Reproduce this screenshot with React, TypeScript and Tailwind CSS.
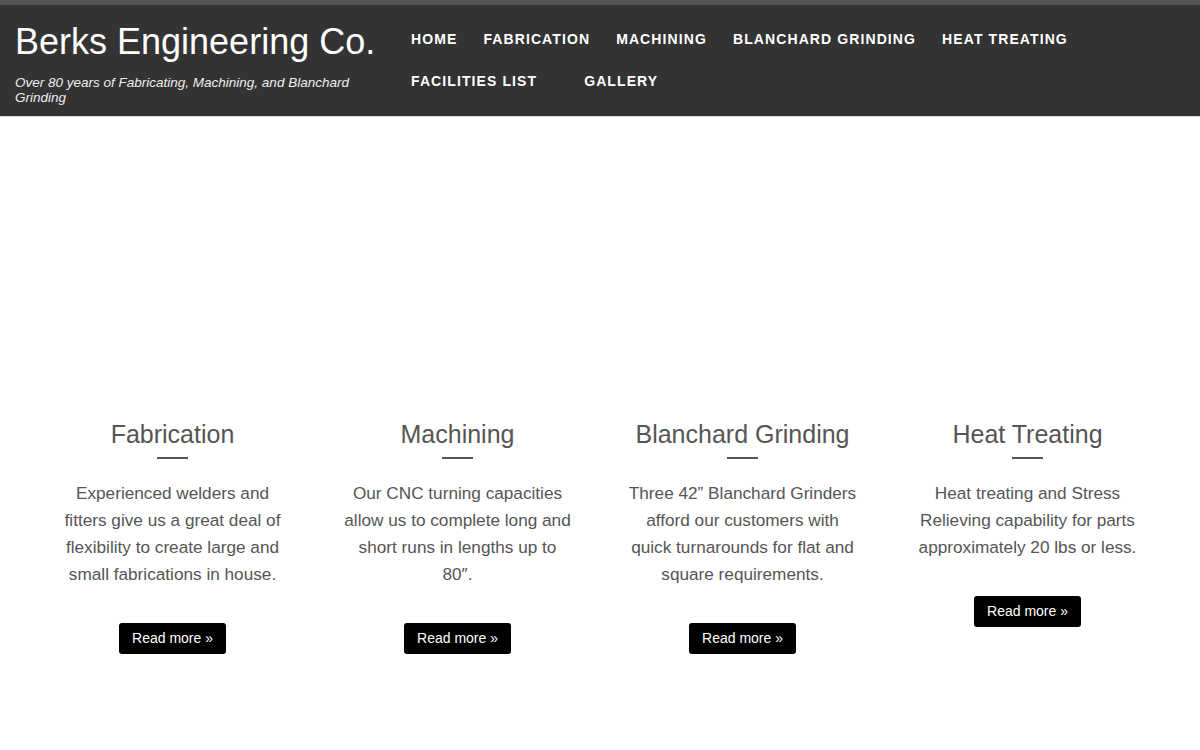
const navRows = [
  ['Home', 'Fabrication', 'Machining', 'Blanchard Grinding', 'Heat Treating'],
  ['Facilities List', 'Gallery'],
]

const services = [
  {
    title: 'Fabrication',
    text: 'Experienced welders and fitters give us a great deal of flexibility to create large and small fabrications in house.',
  },
  {
    title: 'Machining',
    text: 'Our CNC turning capacities allow us to complete long and short runs in lengths up to 80″.',
  },
  {
    title: 'Blanchard Grinding',
    text: 'Three 42” Blanchard Grinders afford our customers with quick turnarounds for flat and square requirements.',
  },
  {
    title: 'Heat Treating',
    text: 'Heat treating and Stress Relieving capability for parts approximately 20 lbs or less.',
  },
]

function Header() {
  return (
    <header className="border-t-[5px] border-[#555555] bg-[#333333] border-b border-b-[#d8d8d8]">
      <div className="flex h-[111px]">
        <div className="w-[395px] shrink-0 pl-[15px] pt-[17px]">
          <h1 className="text-[36px] leading-[40px] text-white">Berks Engineering Co.</h1>
          <p className="mt-[13px] w-[350px] text-[13.5px] leading-[15px] italic text-[#eeeeee]">
            Over 80 years of Fabricating, Machining, and Blanchard Grinding
          </p>
        </div>
        <nav className="pt-[13px] pl-[16px]">
          {navRows.map((row, i) => (
            <ul key={i} className={'flex h-[42px] items-center ' + (i === 1 ? 'gap-[47px]' : 'gap-[26px]')}>
              {row.map((item) => (
                <li
                  key={item}
                  className="text-[14px] font-bold uppercase tracking-[1.1px] text-white"
                >
                  {item}
                </li>
              ))}
            </ul>
          ))}
        </nav>
      </div>
    </header>
  )
}

export default function App() {
  return (
    <div className="min-h-[750px] bg-white font-['Liberation_Sans',Arial,sans-serif]">
      <Header />
      <section className="mx-auto grid w-[1140px] grid-cols-4 pt-[302px]">
        {services.map((s) => (
          <div key={s.title} className="flex flex-col items-center px-[27px] text-center">
            <h2 className="text-[25px] leading-[30px] text-[#555555]">{s.title}</h2>
            <div className="mt-[8px] h-[2px] w-[31px] bg-[#555555]" />
            <p className="mt-[21px] text-[17.2px] leading-[27px] text-[#555555]">{s.text}</p>
            <a className="mt-[35px] rounded-[3px] bg-black px-[13px] py-[6px] text-[14px] leading-[19px] text-white">
              Read more »
            </a>
          </div>
        ))}
      </section>
    </div>
  )
}
